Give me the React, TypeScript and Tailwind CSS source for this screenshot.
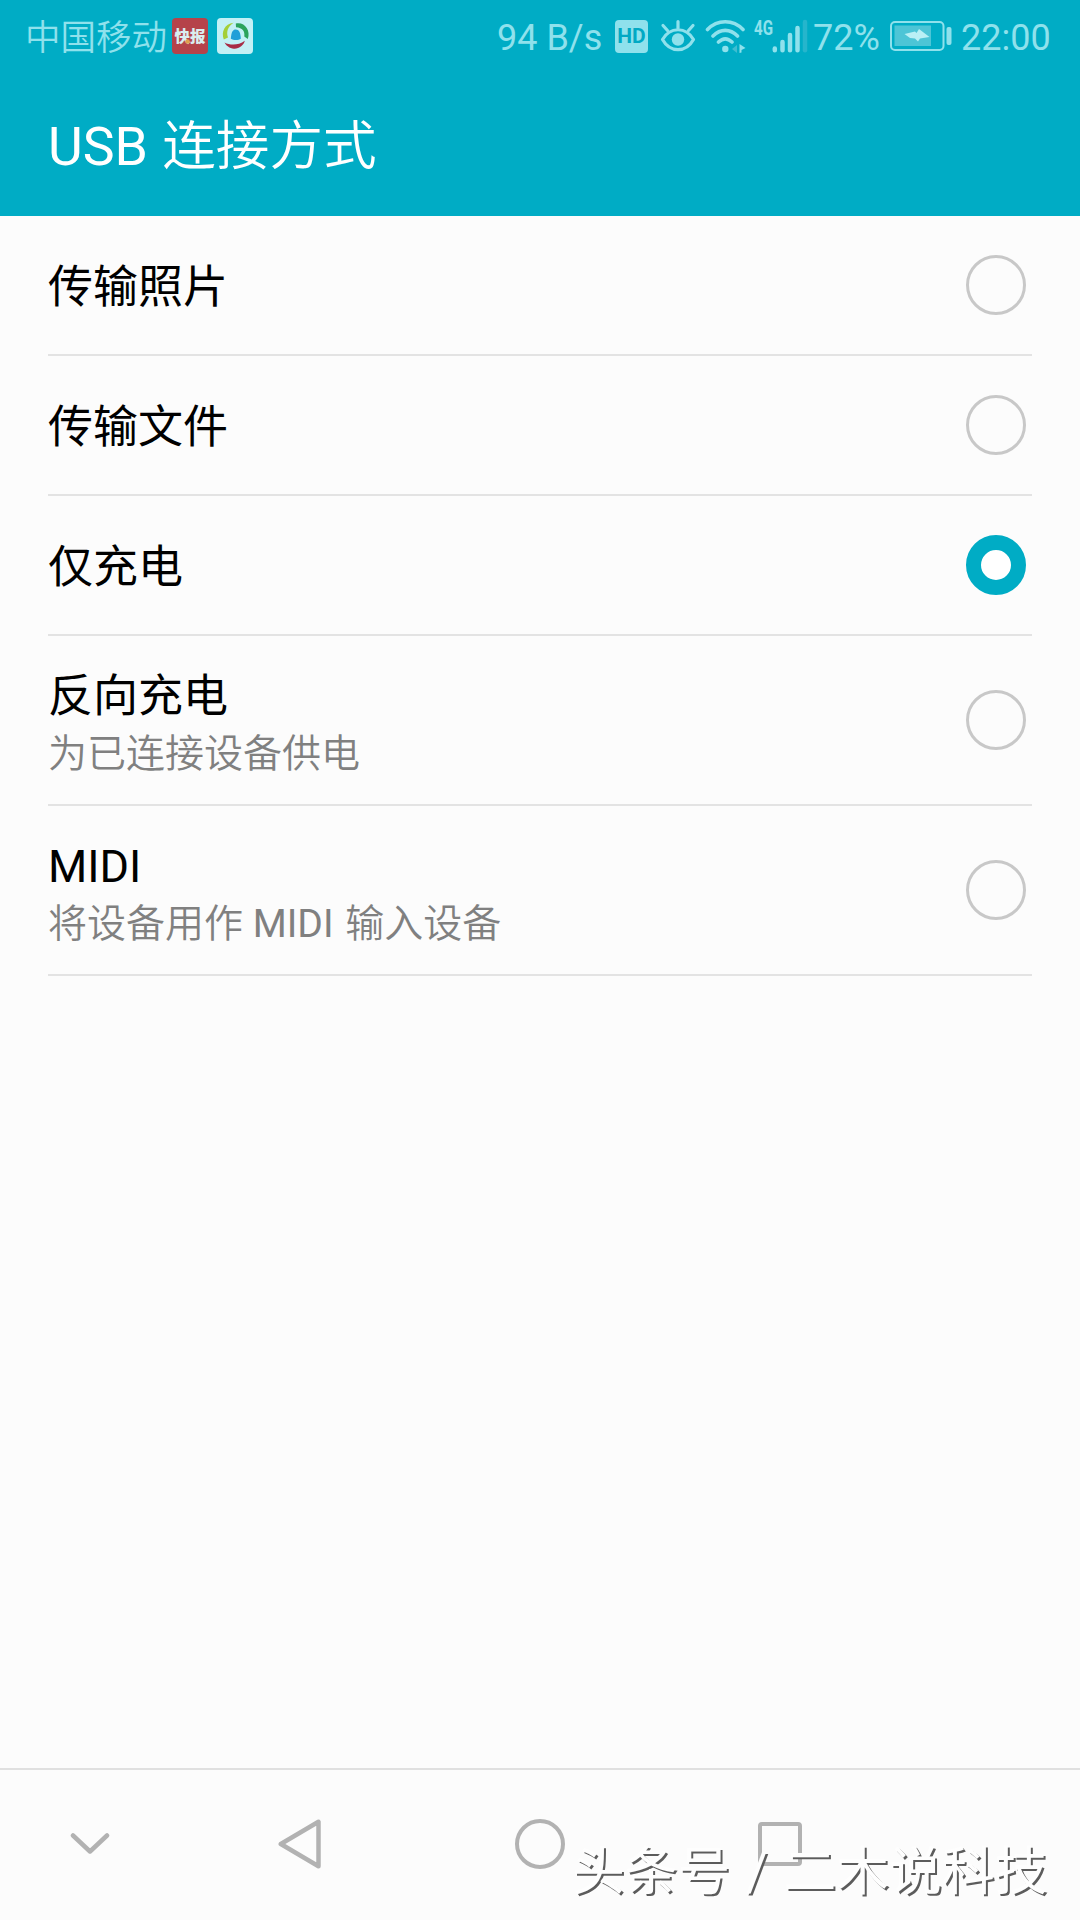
import React from "react";

const FONT = "font-['Roboto','Noto_Sans_CJK_SC',sans-serif]";

function StatusBar() {
  return (
    <div className="flex h-[72px] items-center whitespace-pre text-[36px] leading-[64px] text-[#8fe1ec]">
      <span className="ml-[25px] w-[147px] shrink-0 pt-[4px] text-[35.5px] font-[350]">中国移动</span>
      <svg className="shrink-0" width="36" height="36" viewBox="0 0 36 36">
        <rect width="36" height="36" rx="4" fill="#b5434a" />
        <text x="18" y="24" fontSize="15.500" fontWeight="900" textAnchor="middle" fill="#d9eef0" fontFamily="Noto Sans CJK SC, sans-serif">快报</text>
        <circle cx="15.500" cy="23.500" r="2.300" fill="#e0a050" />
      </svg>
      <svg className="ml-[9px] shrink-0" width="36" height="36" viewBox="0 0 36 36">
        <rect width="36" height="36" rx="4" fill="#c3f0f5" />
        <path d="M16.500 4.800C7.500 6 4 14 6.800 21.500L11 19.500C9 13.500 11 8.500 16.500 4.800Z" fill="#a4cf38" />
        <path d="M18.800 5.400C27.500 3.500 34 12 30.800 21L27.300 18.500C28 13 25.500 9.800 19 9.300Z" fill="#2ba35c" />
        <path d="M7.500 24.500C13 27.500 21.500 27.600 27.800 22.800C27 27 22 31 17 30.700C12.500 30.400 9 27.500 7.500 24.500Z" fill="#a82c45" />
        <path d="M13.800 20.800C14.300 14 15.800 11.500 18.800 11.500C22 11.500 23.500 14.500 23.800 20.800C21.500 22.500 16.500 22.500 13.800 20.800Z" fill="#1f9fd8" />
      </svg>
      <span className="ml-[244px] w-[118px] shrink-0 pt-[4px]">94 B/s</span>
      <span className="flex size-[33px] shrink-0 items-center justify-center rounded-[4px] bg-[#8fe1ec] text-[21px] font-bold leading-[33px] text-[#00a9c4]">HD</span>
      <svg className="ml-[12px] shrink-0" width="36" height="34" viewBox="0 0 36 34" fill="none" stroke="#8fe1ec" strokeWidth="3.200" strokeLinecap="round">
        <path d="M2.500 20.500C10 7.500 26 7.500 33.500 20.500C26 34 10 34 2.500 20.500Z" strokeLinejoin="round" />
        <circle cx="18" cy="20.500" r="6.200" fill="#8fe1ec" stroke="none" />
        <path d="M18 9V2.500M7.500 11.500L3 6.500M28.500 11.500L33 6.500" />
      </svg>
      <svg className="ml-[9px] shrink-0" width="42" height="34" viewBox="0 0 42 34" fill="none" stroke="#8fe1ec" strokeWidth="3.600" strokeLinecap="round">
        <path d="M2.500 10.500C12.500 .2 28 .2 38 10.500M8 17C15.500 9.500 25 9.500 32.500 17M13.500 23C18 18.700 22.500 18.700 27 23" />
        <circle cx="20.300" cy="30" r="3.200" fill="#8fe1ec" stroke="none" />
        <path d="M34.500 25V34L36.500 33.500L36.500 31L40.500 29Z" fill="#8fe1ec" stroke="none" />
        <path d="M32 26L27 30L32 34Z" fill="#3fbdd1" stroke="none" />
      </svg>
      <svg className="ml-[7px] shrink-0" width="54" height="36" viewBox="0 0 54 36">
        <text x="0" y="16.500" fontSize="20.500" fontWeight="700" textLength="19" lengthAdjust="spacingAndGlyphs" fill="#8fe1ec" fontFamily="Roboto, sans-serif">4G</text>
        <g stroke="#8fe1ec" strokeWidth="4.500" strokeLinecap="round">
          <path d="M20.800 30.500V32.200M28.500 24V32.200M36 17V32.200M43.500 10V32.200" />
          <path d="M51 4V32.200" stroke="#26b5cc" />
        </g>
      </svg>
      <span className="ml-[5px] w-[77px] shrink-0 pt-[4px]">72%</span>
      <svg className="shrink-0" width="62" height="30" viewBox="0 0 62 30">
        <rect x="1" y="1" width="52.500" height="28" rx="4" fill="none" stroke="#8fe1ec" strokeWidth="2" />
        <rect x="4.500" y="4.500" width="36.500" height="20.500" fill="#4dc5d6" />
        <path d="M14.500 13L25 10.500L26.500 12L29 8L39.500 16L30 17.500L28 20.500L25 17.500L20 17Z" fill="#b9f0f5" />
        <rect x="56.500" y="6" width="5" height="18" rx="2" fill="#8fe1ec" />
      </svg>
      <span className="ml-[9px] shrink-0 pt-[4px]">22:00</span>
    </div>
  );
}

function Radio({ on }: { on?: boolean }) {
  return on ? (
    <span className="mr-[6px] size-[60px] shrink-0 rounded-full border-[15px] border-[#00acc5] bg-white" />
  ) : (
    <span className="mr-[6px] size-[60px] shrink-0 rounded-full border-3 border-[#c8c8c8]" />
  );
}

function Row({ title, sub, on }: { title: string; sub?: React.ReactNode; on?: boolean }) {
  return (
    <div className={(sub ? "h-[170px]" : "h-[140px]") + " flex items-center justify-between border-b-2 border-[#e3e3e3]"}>
      <div className={(sub ? "pt-[9px]" : "pt-[6px]") + " flex flex-col"}>
        <span className="text-[45px] leading-[58px] text-black">{title}</span>
        {sub && <span className="text-[39px] leading-[56px] text-[#808080] font-[350]">{sub}</span>}
      </div>
      <Radio on={on} />
    </div>
  );
}

export default function App() {
  return (
    <div className={FONT + " relative flex h-[1920px] w-[1080px] flex-col overflow-hidden bg-[#fcfcfc]"}>
      <header className="h-[216px] bg-[#00acc5]">
        <StatusBar />
        <h1 className="flex h-[144px] items-center whitespace-pre pl-[48px] pt-[6px] text-[53.6px] font-[350] leading-[72px] text-white">
          <span className="mr-px font-normal">USB </span>连接方式
        </h1>
      </header>
      <main className="flex-1 px-[48px]">
        <Row title="传输照片" />
        <Row title="传输文件" />
        <Row title="仅充电" on />
        <Row title="反向充电" sub="为已连接设备供电" />
        <Row title="MIDI" sub={<>将设备用作<span className="mr-[2px] font-normal"> MIDI </span>输入设备</>} />
      </main>
      <nav className="flex h-[152px] items-center border-t-2 border-[#e0e0e0] pb-[2px]">
        <svg className="ml-[70px] shrink-0" width="40" height="50" viewBox="0 0 40 50" fill="none" stroke="#b2b2b2" strokeWidth="4.500" strokeLinecap="round" strokeLinejoin="round">
          <path d="M3 16.500L20 32.500L37 16.500" />
        </svg>
        <svg className="ml-[168px] shrink-0" width="44" height="50" viewBox="0 0 44 50" fill="none" stroke="#b2b2b2" strokeWidth="4.500" strokeLinejoin="round">
          <path d="M40.500 2.800V47.200L2.800 25Z" />
        </svg>
        <span className="ml-[193px] size-[50px] shrink-0 rounded-full border-[4.500px] border-[#b2b2b2]" />
        <span className="ml-[193px] size-[44px] shrink-0 rounded-[4px] border-4 border-[#b2b2b2]" />
      </nav>
      <div className="absolute left-[572px] top-[1834px] flex whitespace-pre text-[52.800px] leading-[76px] text-[#fefefe] [text-shadow:2px_2px_0_#5c5c5c]">
        头条号<span className="w-[53px] text-center"> / </span>二木说科技
      </div>
    </div>
  );
}
